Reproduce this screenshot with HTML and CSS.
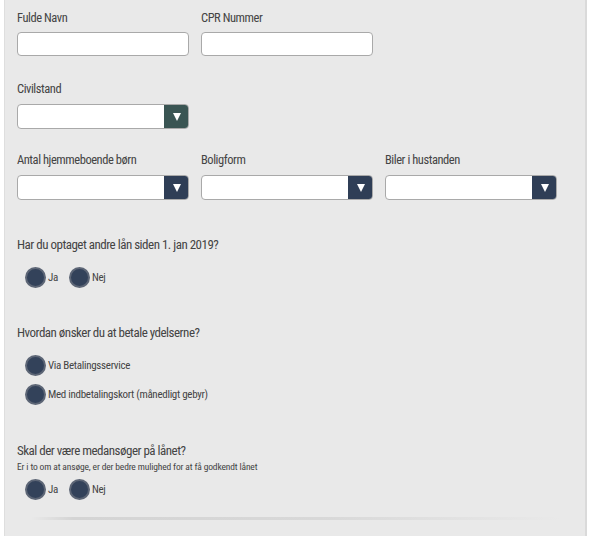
FILE: index.html
```html
<!DOCTYPE html>
<html lang="da">
<head>
  <meta charset="UTF-8" />
  <title>Låneansøgning</title>
  <link rel="stylesheet" href="styles.css">
</head>
<body>
  <div class="panel">
    <div class="row">
      <div class="field">
        <label class="field-label">Fulde Navn</label>
        <input type="text" class="text-input">
      </div>
      <div class="field">
        <label class="field-label">CPR Nummer</label>
        <input type="text" class="text-input">
      </div>
    </div>

    <div class="row">
      <div class="field">
        <label class="field-label">Civilstand</label>
        <div class="select teal">
          <span class="select-value"></span>
          <span class="select-arrow"></span>
        </div>
      </div>
    </div>

    <div class="row">
      <div class="field">
        <label class="field-label">Antal hjemmeboende børn</label>
        <div class="select">
          <span class="select-value"></span>
          <span class="select-arrow"></span>
        </div>
      </div>
      <div class="field">
        <label class="field-label">Boligform</label>
        <div class="select">
          <span class="select-value"></span>
          <span class="select-arrow"></span>
        </div>
      </div>
      <div class="field">
        <label class="field-label">Biler i hustanden</label>
        <div class="select">
          <span class="select-value"></span>
          <span class="select-arrow"></span>
        </div>
      </div>
    </div>

    <div class="question q-loans">
      <div class="question-title">Har du optaget andre lån siden 1. jan 2019?</div>
      <div class="radios inline">
        <label class="radio"><span class="dot"></span>Ja</label>
        <label class="radio"><span class="dot"></span>Nej</label>
      </div>
    </div>

    <div class="question q-payment">
      <div class="question-title">Hvordan ønsker du at betale ydelserne?</div>
      <div class="radios stacked">
        <label class="radio"><span class="dot"></span>Via Betalingsservice</label>
        <label class="radio"><span class="dot"></span>Med indbetalingskort (månedligt gebyr)</label>
      </div>
    </div>

    <div class="question q-coapplicant">
      <div class="question-title">Skal der være medansøger på lånet?</div>
      <div class="question-hint">Er i to om at ansøge, er der bedre mulighed for at få godkendt lånet</div>
      <div class="radios inline">
        <label class="radio"><span class="dot"></span>Ja</label>
        <label class="radio"><span class="dot"></span>Nej</label>
      </div>
    </div>

    <div class="divider"></div>
  </div>
</body>
</html>
```

FILE: styles.css
```css
body {
  margin: 0;
  background-color: #fff;
  font-family: "Roboto Condensed", "Liberation Sans Narrow", Roboto, sans-serif;
  color: #444;
}

.panel {
  margin-left: 4px;
  width: 583px;
  min-height: 536px;
  box-sizing: border-box;
  background-color: #e9e9e9;
  border-left: 1px solid #dedede;
  border-right: 2px solid #dadada;
  padding: 10px 0 0 12px;
}

.row {
  display: flex;
  gap: 12px;
  margin-bottom: 23px;
}

.row:first-child {
  margin-bottom: 25px;
}

.field {
  width: 172px;
}

.field-label {
  display: block;
  font-size: 12.5px;
  letter-spacing: -0.45px;
  height: 22px;
  line-height: 16px;
}

.text-input {
  display: block;
  width: 172px;
  height: 24px;
  box-sizing: border-box;
  border: 1px solid #a9a9a9;
  border-radius: 4px;
  background: #fff;
  margin: 0;
}

.select {
  display: flex;
  height: 25px;
  margin-top: 1px;
  box-sizing: border-box;
  border: 1px solid #a9a9a9;
  border-radius: 4px;
  background: #fff;
  overflow: hidden;
}

.select-value {
  flex: 1;
}

.select-arrow {
  width: 25px;
  margin: -1px -1px -1px 0;
  background-color: #2f3e56;
  display: flex;
  align-items: center;
  justify-content: center;
}

.select-arrow::after {
  content: "";
  border-left: 4px solid transparent;
  border-right: 4px solid transparent;
  border-top: 8px solid #fff;
}

.select.teal .select-arrow {
  background-color: #3a5553;
}

.question {
  margin-top: 36px;
}

.q-coapplicant {
  margin-top: 37px;
}

.question-title {
  font-size: 13px;
  letter-spacing: -0.5px;
  line-height: 18px;
}

.question-hint {
  font-size: 9.5px;
  letter-spacing: -0.15px;
  line-height: 14px;
}

.radios {
  padding-left: 8px;
  margin-top: 13px;
}

.radios.inline {
  display: flex;
  gap: 11px;
}

.radios.stacked {
  display: flex;
  flex-direction: column;
  gap: 8px;
}

.question-hint + .radios {
  margin-top: 5px;
}

.radio {
  display: flex;
  align-items: center;
  font-size: 11px;
  letter-spacing: -0.3px;
  height: 21px;
}

.dot {
  width: 17px;
  height: 17px;
  border-radius: 50%;
  background-color: #33425a;
  border: 2px solid #5d6676;
  margin-right: 2px;
}

.divider {
  margin: 17px 0 0 14px;
  width: 530px;
  height: 3px;
  background: linear-gradient(to right, rgba(210,210,210,0), #d4d4d4 8%, #d8d8d8 55%, rgba(222,222,222,0));
}
```
